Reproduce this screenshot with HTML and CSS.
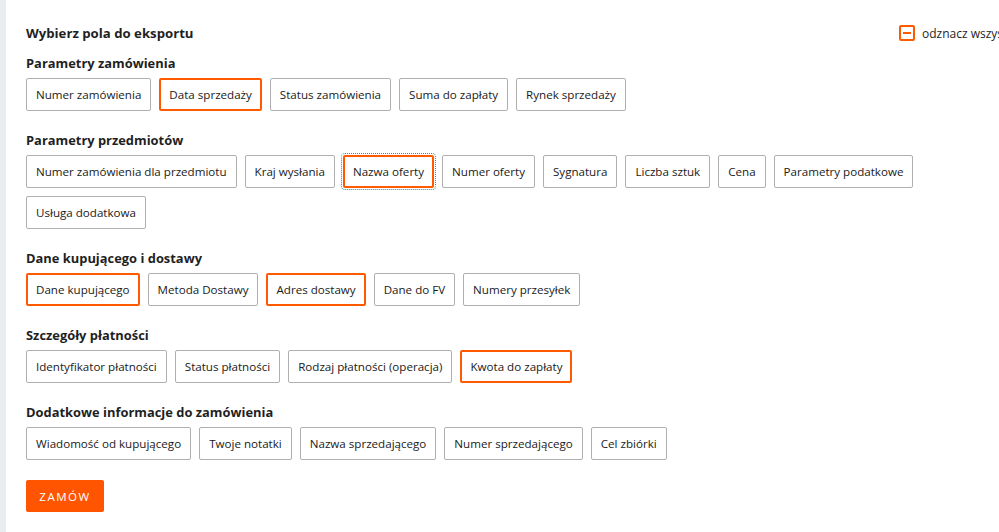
FILE: index.html
```html
<!DOCTYPE html>
<html lang="pl">
<head>
  <meta charset="UTF-8" />
  <meta name="viewport" content="width=device-width, initial-scale=1.0" />
  <title>Eksport zamówień</title>
  <link rel="stylesheet" href="styles.css">
</head>
<body>
  <div class="page">
    <div class="content">
      <div class="header">
        <h1 class="title">Wybierz pola do eksportu</h1>
        <label class="toggle-all">
          <span class="checkbox"><span class="checkbox-dash"></span></span>
          odznacz wszystkie
        </label>
      </div>

      <div class="section">
        <h2 class="section-title">Parametry zamówienia</h2>
        <div class="fields">
          <button class="field">Numer zamówienia</button>
          <button class="field selected">Data sprzedaży</button>
          <button class="field">Status zamówienia</button>
          <button class="field">Suma do zapłaty</button>
          <button class="field">Rynek sprzedaży</button>
        </div>
      </div>

      <div class="section">
        <h2 class="section-title">Parametry przedmiotów</h2>
        <div class="fields">
          <button class="field">Numer zamówienia dla przedmiotu</button>
          <button class="field">Kraj wysłania</button>
          <button class="field selected focused">Nazwa oferty</button>
          <button class="field">Numer oferty</button>
          <button class="field">Sygnatura</button>
          <button class="field">Liczba sztuk</button>
          <button class="field">Cena</button>
          <button class="field">Parametry podatkowe</button>
          <button class="field">Usługa dodatkowa</button>
        </div>
      </div>

      <div class="section">
        <h2 class="section-title">Dane kupującego i dostawy</h2>
        <div class="fields">
          <button class="field selected">Dane kupującego</button>
          <button class="field">Metoda Dostawy</button>
          <button class="field selected">Adres dostawy</button>
          <button class="field">Dane do FV</button>
          <button class="field">Numery przesyłek</button>
        </div>
      </div>

      <div class="section">
        <h2 class="section-title">Szczegóły płatności</h2>
        <div class="fields">
          <button class="field">Identyfikator płatności</button>
          <button class="field">Status płatności</button>
          <button class="field">Rodzaj płatności (operacja)</button>
          <button class="field selected">Kwota do zapłaty</button>
        </div>
      </div>

      <div class="section">
        <h2 class="section-title">Dodatkowe informacje do zamówienia</h2>
        <div class="fields">
          <button class="field">Wiadomość od kupującego</button>
          <button class="field">Twoje notatki</button>
          <button class="field">Nazwa sprzedającego</button>
          <button class="field">Numer sprzedającego</button>
          <button class="field">Cel zbiórki</button>
        </div>
      </div>

      <button class="order-btn">Zamów</button>
    </div>
  </div>
</body>
</html>
```

FILE: styles.css
```css
html, body {
  overflow: hidden;
}
body {
  margin: 0;
  font-family: "Open Sans", Arial, sans-serif;
  color: #1f1f1f;
  background-color: #fff;
}
.page {
  display: flex;
  min-height: 532px;
  border-left: 6px solid #e9edf1;
}
.content {
  padding: 23px 0 0 20px;
  width: 1010px;
  flex-shrink: 0;
}
.header {
  display: flex;
  justify-content: space-between;
  align-items: center;
  height: 20px;
  margin-bottom: 11px;
}
.title {
  margin: 0;
  font-size: 13.2px;
  font-weight: 700;
  line-height: 20px;
}
.toggle-all {
  display: flex;
  align-items: center;
  gap: 7px;
  width: 137px;
  font-size: 12px;
  color: #1f1f1f;
  white-space: nowrap;
}
.checkbox {
  width: 16px;
  height: 16px;
  flex-shrink: 0;
  box-sizing: border-box;
  border: 2px solid #ff5a00;
  border-radius: 2px;
  display: flex;
  align-items: center;
  justify-content: center;
}
.checkbox-dash {
  width: 8px;
  height: 2px;
  background: #ff5a00;
}
.section + .section {
  margin-top: 20px;
}
.section-title {
  margin: 0 0 6px;
  font-size: 12.9px;
  font-weight: 700;
  line-height: 18px;
}
.fields {
  display: flex;
  flex-wrap: wrap;
  gap: 8px;
  max-width: 900px;
}
.field {
  height: 33px;
  box-sizing: border-box;
  padding: 0 9px;
  border: 1px solid #b0b0b0;
  border-radius: 2px;
  background: #fff;
  color: #1a1a1a;
  font-family: "Open Sans", Arial, sans-serif;
  font-size: 11.6px;
  cursor: pointer;
}
.field.selected {
  border: 2px solid #ff5a00;
  padding: 0 8px;
}
.field.focused {
  outline: 1px dotted #1d9a8a;
  outline-offset: 1px;
}
.order-btn {
  margin-top: 20px;
  width: 78px;
  height: 32px;
  border: none;
  border-radius: 2px;
  background: #ff5500;
  color: #fff;
  font-family: "Open Sans", Arial, sans-serif;
  font-size: 11.5px;
  letter-spacing: 1.5px;
  text-transform: uppercase;
  cursor: pointer;
}
```
